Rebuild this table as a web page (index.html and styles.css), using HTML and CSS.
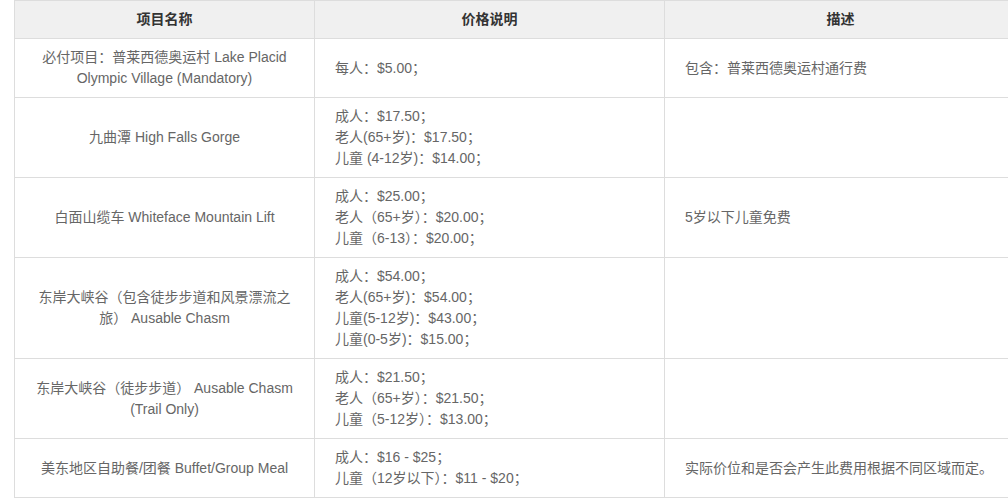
FILE: index.html
```html
<!DOCTYPE html>
<html lang="zh-CN">
<head>
<meta charset="utf-8">
<title>价格表</title>
<link rel="stylesheet" href="styles.css">
</head>
<body>
<div class="wrap">
<table class="price-table">
  <colgroup>
    <col class="c1">
    <col class="c2">
    <col class="c3">
  </colgroup>
  <thead>
    <tr>
      <th>项目名称</th>
      <th>价格说明</th>
      <th>描述</th>
    </tr>
  </thead>
  <tbody>
    <tr>
      <td class="name">必付项目：普莱西德奥运村 Lake Placid Olympic Village (Mandatory)</td>
      <td>每人：$5.00；</td>
      <td>包含：普莱西德奥运村通行费</td>
    </tr>
    <tr>
      <td class="name">九曲潭 High Falls Gorge</td>
      <td>成人：$17.50；<br>老人(65+岁)：$17.50；<br>儿童 (4-12岁)：$14.00；</td>
      <td></td>
    </tr>
    <tr>
      <td class="name">白面山缆车 Whiteface Mountain Lift</td>
      <td>成人：$25.00；<br>老人（65+岁）：$20.00；<br>儿童（6-13）：$20.00；</td>
      <td>5岁以下儿童免费</td>
    </tr>
    <tr>
      <td class="name">东岸大峡谷（包含徒步步道和风景漂流之旅） Ausable Chasm</td>
      <td>成人：$54.00；<br>老人(65+岁)：$54.00；<br>儿童(5-12岁)：$43.00；<br>儿童(0-5岁)：$15.00；</td>
      <td></td>
    </tr>
    <tr>
      <td class="name">东岸大峡谷（徒步步道） Ausable Chasm (Trail Only)</td>
      <td>成人：$21.50；<br>老人（65+岁）：$21.50；<br>儿童（5-12岁）：$13.00；</td>
      <td></td>
    </tr>
    <tr>
      <td class="name">美东地区自助餐/团餐 Buffet/Group Meal</td>
      <td>成人：$16 - $25；<br>儿童（12岁以下）：$11 - $20；</td>
      <td>实际价位和是否会产生此费用根据不同区域而定。</td>
    </tr>
  </tbody>
</table>
</div>
</body>
</html>
```
FILE: styles.css
```css
html, body {
  margin: 0;
  padding: 0;
  overflow: hidden;
  background: #fff;
}
body {
  font-family: "Liberation Sans", Arial, "Noto Sans CJK SC", sans-serif;
  font-size: 14px;
  color: #666;
}
.wrap {
  padding-left: 14px;
  width: 1100px;
}
.price-table {
  border-collapse: collapse;
  width: 1002px;
  table-layout: fixed;
}
.c1 { width: 300px; }
.c2 { width: 350px; }
.c3 { width: 352px; }
.price-table th,
.price-table td {
  box-sizing: border-box;
  border: 1px solid #ddd;
  line-height: 21px;
  padding: 8px 20px;
  vertical-align: middle;
}
.price-table th {
  background: #f0f0f0;
  color: #333;
  font-weight: bold;
  text-align: center;
}
.price-table td { text-align: left; }
.price-table td.name { text-align: center; }
```
